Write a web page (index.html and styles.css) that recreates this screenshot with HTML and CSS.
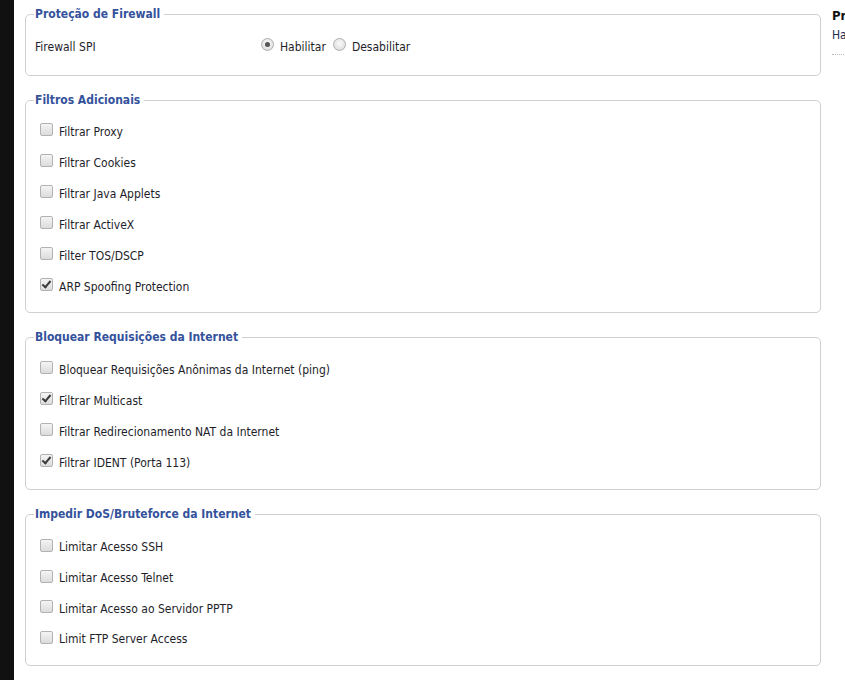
FILE: index.html
```html
<!DOCTYPE html>
<html lang="pt">
<head>
<meta charset="utf-8">
<link rel="stylesheet" href="styles.css">
</head>
<body>
<div class="page">
  <div class="sidebar"></div>
  <div class="main">
    <fieldset class="group g1">
      <legend>Proteção de Firewall</legend>
      <div class="row spi">
        <span class="label">Firewall SPI</span>
        <span class="radios">
          <label class="opt"><span class="radio on"></span>Habilitar</label>
          <label class="opt"><span class="radio"></span>Desabilitar</label>
        </span>
      </div>
    </fieldset>

    <fieldset class="group g2">
      <legend>Filtros Adicionais</legend>
      <div class="row"><span class="cb"></span>Filtrar Proxy</div>
      <div class="row"><span class="cb"></span>Filtrar Cookies</div>
      <div class="row"><span class="cb"></span>Filtrar Java Applets</div>
      <div class="row"><span class="cb"></span>Filtrar ActiveX</div>
      <div class="row"><span class="cb"></span>Filter TOS/DSCP</div>
      <div class="row"><span class="cb on"></span>ARP Spoofing Protection</div>
    </fieldset>

    <fieldset class="group g3">
      <legend>Bloquear Requisições da Internet</legend>
      <div class="row"><span class="cb"></span>Bloquear Requisições Anônimas da Internet (ping)</div>
      <div class="row"><span class="cb on"></span>Filtrar Multicast</div>
      <div class="row"><span class="cb"></span>Filtrar Redirecionamento NAT da Internet</div>
      <div class="row"><span class="cb on"></span>Filtrar IDENT (Porta 113)</div>
    </fieldset>

    <fieldset class="group g4">
      <legend>Impedir DoS/Bruteforce da Internet</legend>
      <div class="row"><span class="cb"></span>Limitar Acesso SSH</div>
      <div class="row"><span class="cb"></span>Limitar Acesso Telnet</div>
      <div class="row"><span class="cb"></span>Limitar Acesso ao Servidor PPTP</div>
      <div class="row"><span class="cb"></span>Limit FTP Server Access</div>
    </fieldset>
  </div>
  <div class="help">
    <div class="help-title">Proteção</div>
    <div class="help-text">Habilite</div>
    <div class="help-sep"></div>
  </div>
</div>
</body>
</html>
```

FILE: styles.css
```css
html, body {
  margin: 0;
  padding: 0;
  background: #fff;
  overflow: hidden;
  height: 680px;
}
body {
  font-family: "DejaVu Sans Condensed", "DejaVu Sans", sans-serif;
  font-size: 12px;
  color: #1e1e2a;
}
.page {
  display: flex;
  height: 680px;
  width: 1200px;
}
.sidebar {
  width: 14px;
  flex: none;
  background: #111;
}
.main {
  flex: none;
  width: 796px;
  padding: 6px 0 0 11px;
}
.group {
  margin: 0 0 16px 0;
  padding: 8px 8px 11px 8px;
  border: 1px solid #cfcfcf;
  border-radius: 5px;
}
.g1 { padding-top: 9px; padding-bottom: 13px; }
.g2 { padding-bottom: 10px; }
.g3 { padding-top: 9px; padding-bottom: 11px; }
.g4 { padding-top: 10px; padding-bottom: 10px; }
.g4 .row { height: 30.7px; }
legend {
  padding: 0 4px 0 1px;
  font-weight: bold;
  font-size: 12px;
  color: #34529c;
  line-height: 16px;
}
.row {
  height: 31px;
  display: flex;
  align-items: center;
  padding-left: 6px;
}
.spi { padding-left: 1px; }
.label { width: 226px; }
.radios { display: flex; gap: 7px; }
.opt { display: flex; align-items: center; }
.cb {
  width: 11px;
  height: 11px;
  border: 1px solid #b2b2b2;
  border-radius: 2px;
  background: linear-gradient(#f4f4f4, #dcdcdc);
  margin-right: 6px;
  position: relative;
  top: -2px;
  flex: none;
}
.cb.on::after {
  content: "";
  position: absolute;
  left: 3px;
  top: 0px;
  width: 3px;
  height: 7px;
  border: solid #3a3a3a;
  border-width: 0 2px 2px 0;
  transform: rotate(40deg);
}
.radio {
  width: 11px;
  height: 11px;
  border: 1px solid #b0b0b0;
  border-radius: 50%;
  background: radial-gradient(circle at 50% 40%, #fafafa, #d6d6d6);
  margin-right: 6px;
  position: relative;
  top: -2px;
  flex: none;
}
.radio.on::after {
  content: "";
  position: absolute;
  left: 3px;
  top: 3px;
  width: 5px;
  height: 5px;
  border-radius: 50%;
  background: #555;
}
.help {
  margin-left: 11px;
  padding-top: 8px;
  width: 200px;
}
.help-title {
  font-weight: bold;
  font-size: 13px;
  color: #111;
  line-height: 16px;
}
.help-text {
  color: #1e2a50;
  line-height: 18px;
  margin-top: 2px;
}
.help-sep {
  margin-top: 10px;
  border-top: 1px dotted #bbb;
}
```
